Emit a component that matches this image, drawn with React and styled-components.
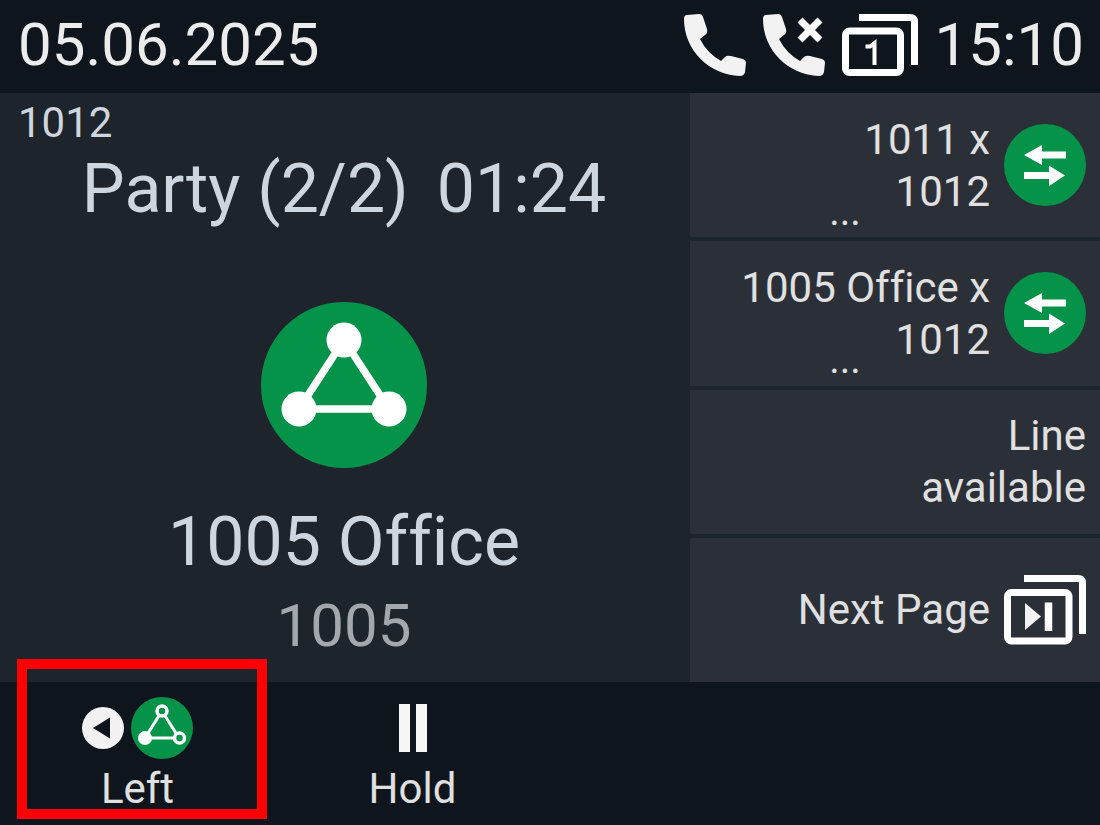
import React from "react";
import styled, { createGlobalStyle } from "styled-components";

const GlobalStyle = createGlobalStyle`
  *, *::before, *::after { box-sizing: border-box; }
  body {
    margin: 0;
    background: #0f151c;
    font-family: Roboto, "Liberation Sans", sans-serif;
    font-variant-ligatures: none;
  }
  button {
    border: 0;
    margin: 0;
    padding: 0;
    background: none;
    color: inherit;
    font: inherit;
    font-variant-ligatures: none;
    cursor: pointer;
  }
  svg { display: block; flex: none; }
`;

const Screen = styled.div`
  min-height: 100vh;
  display: grid;
  grid-template-rows: auto 1fr auto;
  background: #0f151c;
  color: #e0e0e0;
`;

const StatusBar = styled.header`
  display: flex;
  align-items: center;
  justify-content: space-between;
  height: 93px;
  padding: 0 16px 4px 18px;
  font-size: 60px;
  line-height: 72px;
  color: #ececec;
`;

const StatusGroup = styled.div`
  display: flex;
  align-items: center;
  gap: 17px;
`;

const Main = styled.main`
  display: grid;
  grid-template-columns: 690fr 410fr;
  background: #1e242b;
`;

const CallPanel = styled.section`
  display: flex;
  flex-direction: column;
  align-items: center;
  padding: 4px 20px 12px 18px;
  color: #cdd5de;
`;

const Account = styled.div`
  align-self: flex-start;
  font-size: 42px;
  line-height: 52px;
`;

const CallTitle = styled.h1`
  display: flex;
  gap: 28px;
  margin: 0;
  font-size: 68px;
  font-weight: 400;
  line-height: 80px;
  white-space: nowrap;
`;

const CallArt = styled.div`
  flex: 1;
  display: grid;
  place-items: center;
  padding-top: 38px;
`;

const PartyName = styled.h2`
  margin: 0;
  font-size: 68px;
  font-weight: 400;
  line-height: 80px;
`;

const PartyNumber = styled.div`
  font-size: 60px;
  line-height: 88px;
  color: #a3a8af;
`;

const LineKeys = styled.nav`
  display: grid;
  grid-auto-rows: 1fr;
  gap: 4px;
`;

const LineKey = styled.button`
  display: flex;
  align-items: center;
  gap: 14px;
  padding: 0 14px 0 10px;
  background: #2b3038;
`;

const KeyText = styled.span`
  flex: 1;
  display: flex;
  flex-direction: column;
  font-size: 42px;
  line-height: 52px;
  text-align: right;
`;

const More = styled.span`
  margin-top: -10px;
  font-size: 40px;
  line-height: 8px;
  text-align: center;
`;

const SoftKeys = styled.footer`
  display: grid;
  grid-template-columns: repeat(4, 1fr);
  height: 143px;
`;

const SoftKey = styled.button`
  position: relative;
  display: flex;
  flex-direction: column;
  align-items: center;
  gap: 4px;
  padding-top: 15px;
  font-size: 42px;
  line-height: 52px;
`;

const SoftIcons = styled.span`
  display: flex;
  align-items: center;
  gap: 7px;
  height: 62px;
`;

const Highlight = styled.span`
  position: absolute;
  inset: -23px 8px 6px 17px;
  border: 10px solid #ff0000;
  pointer-events: none;
`;

const HANDSET =
  "M3 1L15 0Q18 0 19 3L23 15Q24 19 21 21L16 25Q23 39 37 47L41 43Q43 41 47 42L59 45Q62 46 62 49L61 58Q60 62 56 62C25 61 0 36 0 5Q0 1 3 1Z";

const PhoneIcon = () => (
  <svg width="62" height="62" viewBox="0 0 62 62" fill="#f2f2f2" aria-hidden="true">
    <path d={HANDSET} />
  </svg>
);

const MissedIcon = () => (
  <svg width="62" height="62" viewBox="0 0 62 62" aria-hidden="true">
    <path d={HANDSET} fill="#f2f2f2" />
    <path d="M37 6L57 26M57 6L37 26" stroke="#fff" strokeWidth="7" />
  </svg>
);

const PageIcon = () => (
  <svg width="76" height="62" viewBox="0 0 76 62" fill="none" stroke="#fff" aria-hidden="true">
    <rect x="3.5" y="17" width="55" height="41.5" rx="4" strokeWidth="7" />
    <path d="M17 3.5H68Q72.500 3.5 72.500 8V51" strokeWidth="7" />
    <path d="M23.500 32.500H28L32.500 29V51" strokeWidth="4" />
  </svg>
);

const NextPageIcon = () => (
  <svg width="82" height="70" viewBox="0 0 82 70" fill="none" stroke="#fff" aria-hidden="true">
    <rect x="3.500" y="17.500" width="61.500" height="48.500" rx="4" strokeWidth="7" />
    <path d="M20 3.500H74Q78.500 3.500 78.500 8V59" strokeWidth="7" />
    <path d="M21 28L37 41.500L21 55Z" fill="#f2f2f2" stroke="none" />
    <path d="M44.500 27.500V56" strokeWidth="7.500" />
  </svg>
);

const TransferIcon = () => (
  <svg width="82" height="82" viewBox="0 0 82 82" aria-hidden="true">
    <circle cx="41" cy="41" r="41" fill="#049349" />
    <path
      d="M20 31L38 21V27.500H62V34.500H38V41ZM61 51.500L45 62V55H20V48H45V41.500Z"
      fill="#fff"
    />
  </svg>
);

const ConferenceIcon = () => (
  <svg width="166" height="166" viewBox="0 0 166 166" aria-hidden="true">
    <circle cx="83" cy="83" r="83" fill="#049349" />
    <path d="M83 38L38 107H128Z" fill="none" stroke="#fff" strokeWidth="7.500" />
    <g fill="#fff">
      <circle cx="83" cy="38" r="17.500" />
      <circle cx="38" cy="107" r="17.500" />
      <circle cx="128" cy="107" r="17.500" />
    </g>
  </svg>
);

const BackIcon = () => (
  <svg width="42" height="42" viewBox="0 0 42 42" aria-hidden="true">
    <circle cx="21" cy="21" r="21" fill="#f2f2f2" />
    <path d="M11 21L28 10.500V31.500Z" fill="#0f151c" />
  </svg>
);

const SmallConferenceIcon = () => (
  <svg width="62" height="62" viewBox="0 0 62 62" aria-hidden="true">
    <circle cx="31" cy="31" r="31" fill="#049349" />
    <path d="M31 14L14 41H48Z" fill="none" stroke="#fff" strokeWidth="3" />
    <circle cx="14" cy="41" r="7" fill="#fff" />
    <g fill="#049349" stroke="#fff" strokeWidth="3.500">
      <circle cx="31" cy="14" r="5" />
      <circle cx="48.500" cy="41" r="5" />
    </g>
  </svg>
);

const HoldIcon = () => (
  <svg width="30" height="50" viewBox="0 0 30 50" fill="#f7f7f7" aria-hidden="true">
    <path d="M1 1H12V49H1ZM18 1H29V49H18Z" />
  </svg>
);

const lineKeys = [
  { lines: ["1011 x", "1012"], more: true, Icon: TransferIcon },
  { lines: ["1005 Office x", "1012"], more: true, Icon: TransferIcon },
  { lines: ["Line", "available"] },
  { lines: ["Next Page"], Icon: NextPageIcon },
];

export default function App() {
  return (
    <Screen>
      <GlobalStyle />
      <StatusBar>
        <time dateTime="2025-06-05">05.06.2025</time>
        <StatusGroup>
          <PhoneIcon />
          <MissedIcon />
          <PageIcon />
          <time>15:10</time>
        </StatusGroup>
      </StatusBar>
      <Main>
        <CallPanel>
          <Account>1012</Account>
          <CallTitle>
            <span>Party (2/2)</span>
            <span>01:24</span>
          </CallTitle>
          <CallArt>
            <ConferenceIcon />
          </CallArt>
          <PartyName>1005 Office</PartyName>
          <PartyNumber>1005</PartyNumber>
        </CallPanel>
        <LineKeys>
          {lineKeys.map(({ lines, more, Icon }, index) => (
            <LineKey key={index} type="button">
              <KeyText>
                {lines.map((line) => (
                  <span key={line}>{line}</span>
                ))}
                {more && <More>...</More>}
              </KeyText>
              {Icon && <Icon />}
            </LineKey>
          ))}
        </LineKeys>
      </Main>
      <SoftKeys>
        <SoftKey type="button">
          <SoftIcons>
            <BackIcon />
            <SmallConferenceIcon />
          </SoftIcons>
          <span>Left</span>
          <Highlight />
        </SoftKey>
        <SoftKey type="button">
          <SoftIcons>
            <HoldIcon />
          </SoftIcons>
          <span>Hold</span>
        </SoftKey>
      </SoftKeys>
    </Screen>
  );
}
